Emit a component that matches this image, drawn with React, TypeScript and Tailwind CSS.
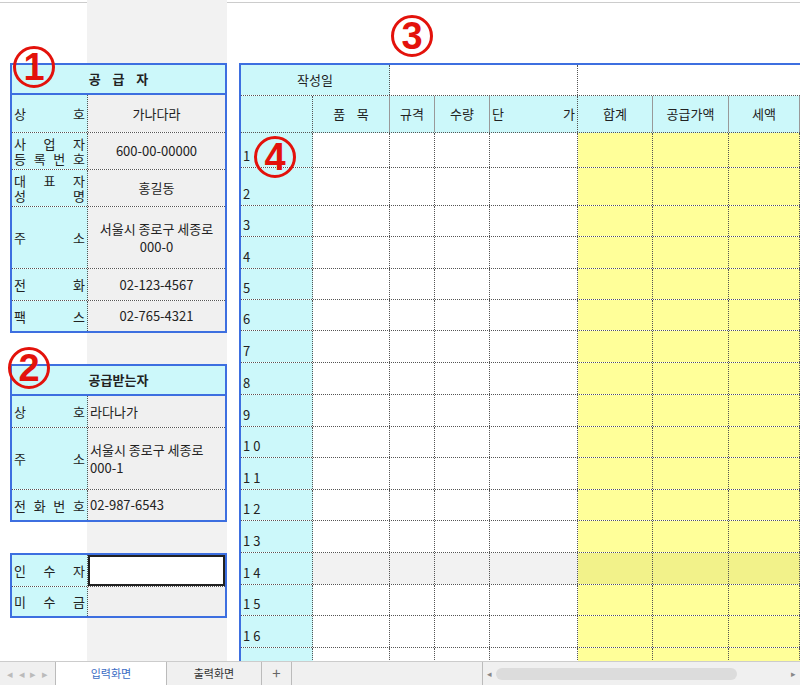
import React from "react";

const cyan = "bg-[#ccf8fa]";
const dot = "border-dotted border-[#555]";

const Spread = ({ chars, lines }: { chars?: string; lines?: string[] }) => (
  <div className="flex flex-col justify-center h-full px-0.5">
    {(lines || [chars || ""]).map((l, i) => (
      <div key={i} className="flex justify-between leading-[15px]">
        {l.split("").map((c, j) => (
          <span key={j}>{c}</span>
        ))}
      </div>
    ))}
  </div>
);

const Circle = ({ n, className }: { n: string; className: string }) => (
  <div
    className={`absolute w-[42px] h-[42px] rounded-full border-[3px] border-[#e3120b] text-[#e3120b] flex items-center justify-center text-[38px] font-bold leading-none ${className}`}
    style={{ fontFamily: "'Liberation Sans', Arial, sans-serif" }}
  >
    {n}
  </div>
);

type Row = { h: number; label: React.ReactNode; value: React.ReactNode; center?: boolean };

const Panel = ({ title, rows, top }: { title?: string; rows: Row[]; top: number }) => (
  <div className="border-2 border-[#3d6fe0] bg-white" style={{ marginTop: top }}>
    {title && (
      <div className={`${cyan} h-[30px] flex items-center justify-center font-bold text-[13px] border-b-2 border-[#3d6fe0] whitespace-pre`}>
        {title}
      </div>
    )}
    {rows.map((r, i) => (
      <div key={i} className={`flex ${i > 0 ? `border-t ${dot}` : ""}`} style={{ height: r.h }}>
        <div className={`w-[76px] ${cyan} border-r ${dot}`}>{r.label}</div>
        <div
          className={`flex-1 bg-[#f0f0f0] flex items-center ${r.center === false ? "justify-start pl-0.5" : "justify-center text-center"} leading-[18px]`}
        >
          {r.value}
        </div>
      </div>
    ))}
  </div>
);

const rowH = [35, 38, 31, 32, 31, 31, 32, 32, 32, 31, 32, 31, 32, 32, 31, 32, 31];
const cols = [72, 77, 45, 55, 88, 75, 76, 71];

export default function App() {
  return (
    <div
      className="relative w-[800px] h-[685px] bg-white overflow-hidden text-[13px] text-[#222]"
      style={{ fontFamily: "'Noto Sans CJK KR', 'Liberation Sans', sans-serif" }}
    >
      <div className="absolute left-0 top-0 w-[800px] h-[3px] border-b border-[#ccc]" />
      <div className="flex h-[661px] overflow-hidden">
        <div className="w-[10px]" />
        <div className="w-[217px] flex flex-col relative">
          <div className="absolute left-[77px] top-0 w-[140px] h-full bg-[#f2f2f2]" />
          <div className="relative">
            <Panel
              top={63}
              title="공    급    자"
              rows={[
                { h: 37, label: <Spread chars="상호" />, value: "가나다라" },
                { h: 37, label: <Spread lines={["사업자", "등록번호"]} />, value: "600-00-00000" },
                { h: 37, label: <Spread lines={["대표자", "성명"]} />, value: "홍길동" },
                { h: 62, label: <Spread chars="주소" />, value: <span>서울시 종로구 세종로<br />000-0</span> },
                { h: 32, label: <Spread chars="전화" />, value: "02-123-4567" },
                { h: 31, label: <Spread chars="팩스" />, value: "02-765-4321" },
              ]}
            />
            <Panel
              top={31}
              title="공급받는자"
              rows={[
                { h: 31, label: <Spread chars="상호" />, value: "라다나가", center: false },
                { h: 62, label: <Spread chars="주소" />, value: <span className="text-left">서울시 종로구 세종로<br />000-1</span>, center: false },
                { h: 31, label: <Spread chars="전화번호" />, value: "02-987-6543", center: false },
              ]}
            />
            <Panel
              top={31}
              rows={[
                { h: 31, label: <Spread chars="인수자" />, value: <div className="w-full h-full bg-white border-2 border-[#222]" /> },
                { h: 30, label: <Spread chars="미수금" />, value: "" },
              ]}
            />
          </div>
        </div>
        <div className="w-[12px]" />
        <div className="flex-1 pt-[63px]">
          <div className="border-2 border-r-0 border-b-0 border-[#3d6fe0] h-[700px]">
            <div className={`flex h-[31px] border-b ${dot}`}>
              <div className={`w-[149px] ${cyan} border-r ${dot} flex items-center justify-center`}>작성일</div>
              <div className={`w-[188px] border-r ${dot}`} />
              <div className="flex-1" />
            </div>
            <div className={`flex h-[37px] ${cyan} border-b ${dot}`}>
              {["", "품    목", "규격", "수량", "단", "합계", "공급가액", "세액"].map((t, i) => (
                <div
                  key={i}
                  className={`border-r ${i === 0 || i === 4 ? dot : "border-[#999]"} flex items-center ${i === 4 ? "justify-between px-0.5" : "justify-center"} whitespace-pre`}
                  style={{ width: cols[i] }}
                >
                  {i === 4 ? (
                    <>
                      <span>단</span>
                      <span>가</span>
                    </>
                  ) : (
                    t
                  )}
                </div>
              ))}
            </div>
            {rowH.map((h, r) => (
              <div key={r} className={`flex border-b ${dot}`} style={{ height: h }}>
                {cols.map((w, c) => (
                  <div
                    key={c}
                    className={`border-r ${dot} ${c === 0 ? cyan : c >= 5 ? (r === 13 ? "bg-[#f2f28a]" : "bg-[#ffff99]") : r === 13 ? "bg-[#f2f2f2]" : "bg-white"} ${c === 0 ? "flex items-end pb-0.5 pl-0.5 tracking-[3px]" : ""}`}
                    style={{ width: w }}
                  >
                    {c === 0 ? (r === 16 ? "50" : String(r + 1)) : ""}
                  </div>
                ))}
              </div>
            ))}
          </div>
        </div>
      </div>
      <div className="flex h-[24px] bg-[#f0f0f0] border-t border-[#ccc] items-stretch text-[11px]">
        <div className="w-[55px] flex items-center justify-around text-[#bbb] px-1">
          <span>◂</span><span>◂</span><span>▸</span><span>▸</span>
        </div>
        <div className="w-[112px] bg-white flex items-center justify-center text-[#3b6cc4] border-x border-[#bbb]">입력화면</div>
        <div className="w-[95px] flex items-center justify-center border-r border-[#bbb] text-[#333]">출력화면</div>
        <div className="w-[30px] flex items-center justify-center text-[#666] text-[15px] border-r border-[#bbb]">+</div>
        <div className="w-[190px]" />
        <div className="flex-1 flex items-center gap-1 px-1 border-l border-[#bbb]">
          <span className="text-[#888] text-[9px]">◂</span>
          <div className="flex-1 h-[12px] bg-[#dcdcdc] rounded-full mr-[50px]" />
          <span className="text-[#888] text-[9px]">▸</span>
        </div>
      </div>
      <Circle n="1" className="left-[13px] top-[46px]" />
      <Circle n="2" className="left-[8px] top-[347px]" />
      <Circle n="3" className="left-[391px] top-[15px]" />
      <Circle n="4" className="left-[254px] top-[136px]" />
    </div>
  );
}
